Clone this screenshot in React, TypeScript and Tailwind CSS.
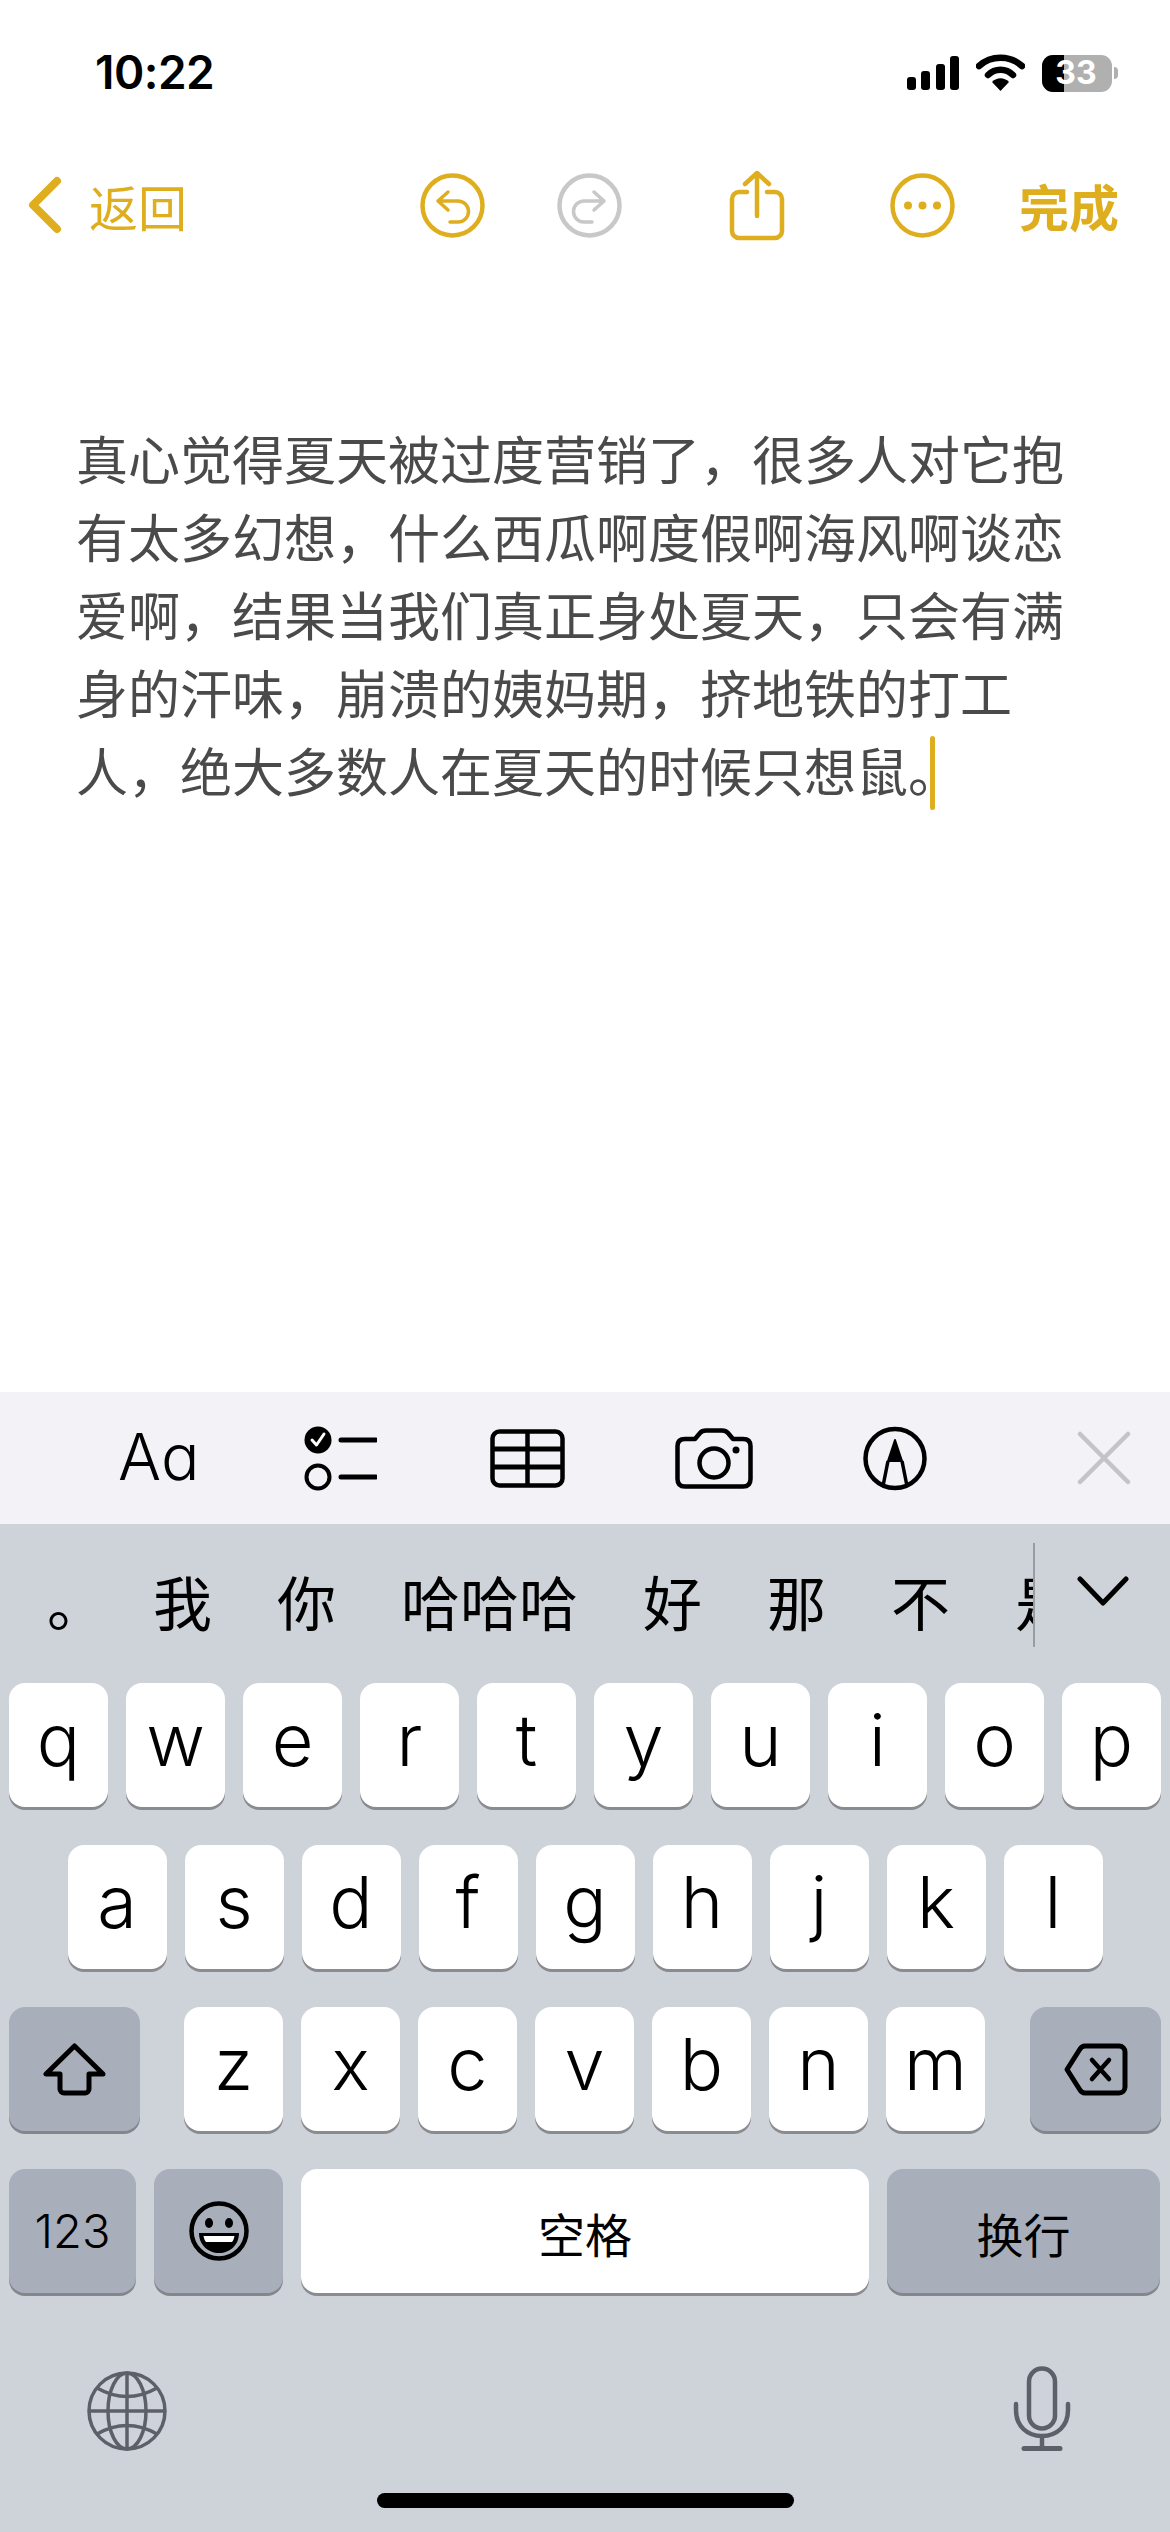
const cjk = { fontFamily: '"Noto Sans CJK SC", sans-serif' }
const latin = { fontFamily: 'Inter, "Noto Sans CJK SC", sans-serif' }

const note =
  '真心觉得夏天被过度营销了，很多人对它抱有太多幻想，什么西瓜啊度假啊海风啊谈恋爱啊，结果当我们真正身处夏天，只会有满身的汗味，崩溃的姨妈期，挤地铁的打工人，绝大多数人在夏天的时候只想鼠。'

const candidates = ['我', '你', '哈哈哈', '好', '那', '不', '是']

function LetterKey({ label }: { label: string }) {
  return (
    <div
      className="flex h-[124px] w-[99px] items-center justify-center rounded-[16px] bg-white pb-[10px] text-[72px] font-[350] leading-none text-black shadow-[0_3px_0_#898b90]"
      style={latin}
    >
      {label}
    </div>
  )
}

function StatusBar() {
  return (
    <div className="flex h-[100px] items-end pb-[8px] pl-[95px] pr-[52px]">
      <span className="translate-y-[5px] text-[46px] font-semibold leading-[50px] tracking-[-0.5px] text-black" style={latin}>
        10:22
      </span>
      <div className="ml-auto flex items-center">
        <svg width="53" height="36" viewBox="0 0 53 36">
          <rect x="0" y="22" width="9" height="13" rx="3" />
          <rect x="14" y="16" width="9" height="19" rx="3" />
          <rect x="29" y="9" width="9" height="26" rx="3" />
          <rect x="43" y="1" width="9" height="34" rx="3" />
        </svg>
        <svg className="ml-[16px]" width="49" height="38" viewBox="0 0 49 38">
          <path d="M3 12 C15 1 34 1 46 12" fill="none" stroke="#000" strokeWidth="6.5" strokeLinecap="round" />
          <path d="M12 21 C19 14 30 14 37 21" fill="none" stroke="#000" strokeWidth="6.5" strokeLinecap="round" />
          <path d="M16 28 C21 23 28 23 33 28 L24.5 37 Z" />
        </svg>
        <div className="relative ml-[17px] flex h-[37px] w-[70px] overflow-hidden rounded-[11px] bg-[#b0b0b0]">
          <div className="h-full w-[22px] bg-black" />
          <span
            className="absolute inset-0 flex items-center justify-center pr-[2px] text-[32px] font-bold leading-none text-white"
            style={latin}
          >
            33
          </span>
        </div>
        <div className="ml-[2px] h-[12px] w-[4px] rounded-r-full bg-[#b0b0b0]" />
      </div>
    </div>
  )
}

function CircleArrow({ color, flip }: { color: string; flip?: boolean }) {
  return (
    <svg width="65" height="65" viewBox="0 0 65 65" fill="none" stroke={color} strokeWidth="4.5" className={flip ? '-scale-x-100' : ''}>
      <circle cx="32.5" cy="32.5" r="30" />
      <path
        d="M28 19 L18 28 L28 37 M18 28 H38 a10.5 10.5 0 0 1 0 21 H30"
        strokeWidth="3.5"
        strokeLinecap="round"
        strokeLinejoin="round"
      />
    </svg>
  )
}

function NavBar() {
  const gold = '#dfae1f'
  return (
    <div className="mt-[69px] flex h-[72px] items-center pl-[28px]">
      <svg width="34" height="58" viewBox="0 0 34 58" fill="none" stroke={gold} strokeWidth="8" strokeLinecap="round" strokeLinejoin="round">
        <path d="M29 5 L5 29 L29 53" />
      </svg>
      <span className="ml-[27px] w-[96px] whitespace-nowrap text-[49px] leading-none text-[#dfae1f]" style={cjk}>
        返回
      </span>
      <div className="ml-[235px]">
        <CircleArrow color={gold} />
      </div>
      <div className="ml-[72px]">
        <CircleArrow color="#c8c8c8" flip />
      </div>
      <svg className="ml-[107px]" width="56" height="71" viewBox="0 0 56 71" fill="none" stroke={gold} strokeWidth="4.5" strokeLinecap="round" strokeLinejoin="round">
        <path d="M18 22 H10 a7 7 0 0 0 -7 7 V61 a7 7 0 0 0 7 7 H46 a7 7 0 0 0 7 -7 V29 a7 7 0 0 0 -7 -7 H38" />
        <path d="M28 46 V3 M16 14 L28 3 L40 14" />
      </svg>
      <svg className="ml-[105px]" width="65" height="65" viewBox="0 0 65 65" fill="none" stroke={gold} strokeWidth="4.5">
        <circle cx="32.5" cy="32.5" r="30" />
        <circle cx="18" cy="32.5" r="4" fill={gold} stroke="none" />
        <circle cx="32.5" cy="32.5" r="4" fill={gold} stroke="none" />
        <circle cx="47" cy="32.5" r="4" fill={gold} stroke="none" />
      </svg>
      <span className="ml-[64px] text-[50px] font-bold leading-none text-[#dfae1f]" style={cjk}>
        完成
      </span>
    </div>
  )
}

function FormatBar() {
  return (
    <div className="relative flex h-[132px] shrink-0 items-center bg-[#f2f2f7]">
      <span className="ml-[118px] w-[186px] pb-[2px] text-[64px] font-light leading-none text-black" style={latin}>
        Aɑ
      </span>
      <svg width="73" height="65" viewBox="0 0 73 65" fill="none" stroke="#000" strokeWidth="5">
        <circle cx="14" cy="14" r="13.5" fill="#000" stroke="none" />
        <path d="M8 14 L12.5 19 L20 8" stroke="#fff" strokeWidth="3" strokeLinecap="round" strokeLinejoin="round" />
        <circle cx="14" cy="51" r="11.5" strokeWidth="4" />
        <path d="M37 14 H72 M37 51 H72" strokeWidth="5" strokeLinecap="round" />
      </svg>
      <svg className="ml-[113px]" width="75" height="59" viewBox="0 0 75 59" fill="none" stroke="#000" strokeWidth="4.5">
        <rect x="2.5" y="2.5" width="70" height="54" rx="7" />
        <path d="M37.5 2.5 V56.5" />
        <path d="M2.5 20 H72.5 M2.5 38 H72.5" strokeWidth="5" />
      </svg>
      <svg className="ml-[110px]" width="78" height="61" viewBox="0 0 78 61" fill="none" stroke="#000" strokeWidth="4.5" strokeLinejoin="round">
        <path d="M10 11 H20 L25 5 Q27 2.500 31 2.500 H47 Q51 2.500 53 5 L58 11 H68 Q75.500 11 75.500 18 V51 Q75.500 58.500 68 58.500 H10 Q2.500 58.500 2.500 51 V18 Q2.500 11 10 11 Z" />
        <circle cx="39" cy="35" r="14.500" />
        <circle cx="61" cy="22" r="3.500" fill="#000" stroke="none" />
      </svg>
      <svg className="ml-[110px]" width="64" height="65" viewBox="0 0 64 65" fill="none" stroke="#000" strokeWidth="4.5">
        <circle cx="32" cy="32.500" r="29.500" />
        <path d="M32 14 L39 35 H25 Z" fill="#000" stroke="#000" strokeWidth="2" strokeLinejoin="round" />
        <path d="M25 35 L20 60 M39 35 L44 60" strokeWidth="3.500" />
      </svg>
      <svg className="ml-[150px]" width="54" height="54" viewBox="0 0 54 54" fill="none" stroke="#c3c3c8" strokeWidth="4.500" strokeLinecap="round">
        <path d="M3 3 L51 51 M51 3 L3 51" />
      </svg>
    </div>
  )
}

function CandidateBar() {
  return (
    <div className="flex h-[159px] items-start pt-[19px]">
      <div
        className="flex h-[104px] w-[1035px] items-center gap-[65px] overflow-hidden whitespace-nowrap border-r-[2px] border-[#9a9ca3] pl-[47px] pt-[10px] text-[59px] leading-none text-black"
        style={cjk}
      >
        <span className="-mr-[18px]">。</span>
        {candidates.map((word) => (
          <span key={word} className="shrink-0">
            {word}
          </span>
        ))}
      </div>
      <svg className="ml-[42px] mt-[33px]" width="52" height="30" viewBox="0 0 52 30" fill="none" stroke="#000" strokeWidth="5" strokeLinecap="round" strokeLinejoin="round">
        <path d="M3 3 L26 27 L49 3" />
      </svg>
    </div>
  )
}

function ShiftKey() {
  return (
    <div className="flex h-[124px] w-[131px] items-center justify-center rounded-[16px] bg-[#a9afba] shadow-[0_3px_0_#83868d]">
      <svg width="63" height="53" viewBox="0 0 63 53" fill="none" stroke="#000" strokeWidth="5" strokeLinejoin="round">
        <path d="M31.500 3 L3 31 H17 V46 a4 4 0 0 0 4 4 H42 a4 4 0 0 0 4 -4 V31 H60 Z" />
      </svg>
    </div>
  )
}

function DeleteKey() {
  return (
    <div className="flex h-[124px] w-[131px] items-center justify-center rounded-[16px] bg-[#a9afba] shadow-[0_3px_0_#83868d]">
      <svg width="64" height="53" viewBox="0 0 64 53" fill="none" stroke="#000" strokeWidth="5" strokeLinejoin="round" strokeLinecap="round">
        <path d="M21 3 H55 a6 6 0 0 1 6 6 V44 a6 6 0 0 1 -6 6 H21 a6 6 0 0 1 -5 -3 L3 26.500 L16 6 a6 6 0 0 1 5 -3 Z" />
        <path d="M28 17 L45 36 M45 17 L28 36" strokeWidth="4.500" />
      </svg>
    </div>
  )
}

function EmojiFace() {
  return (
    <svg width="60" height="60" viewBox="0 0 60 60" fill="none">
      <circle cx="30" cy="30" r="27.500" stroke="#000" strokeWidth="4.500" />
      <ellipse cx="20" cy="22" rx="4" ry="5" fill="#000" />
      <ellipse cx="40" cy="22" rx="4" ry="5" fill="#000" />
      <path d="M10 32 H50 C50 44 41 52 30 52 C19 52 10 44 10 32 Z" fill="#000" />
      <path d="M14.500 35 H45.500 C45 38 44 40 43 41 H17 C16 40 15 38 14.500 35 Z" fill="#fff" />
    </svg>
  )
}

function Keyboard() {
  return (
    <div className="flex h-[1008px] shrink-0 flex-col bg-[#ced2d9]">
      <CandidateBar />
      <div className="flex flex-col gap-[38px]">
        <div className="flex justify-center gap-[18px]">
          {'qwertyuiop'.split('').map((letter) => (
            <LetterKey key={letter} label={letter} />
          ))}
        </div>
        <div className="flex justify-center gap-[18px]">
          {'asdfghjkl'.split('').map((letter) => (
            <LetterKey key={letter} label={letter} />
          ))}
        </div>
        <div className="flex px-[9px]">
          <ShiftKey />
          <div className="ml-[44px] flex gap-[18px]">
            {'zxcvbnm'.split('').map((letter) => (
              <LetterKey key={letter} label={letter} />
            ))}
          </div>
          <div className="ml-auto">
            <DeleteKey />
          </div>
        </div>
        <div className="flex gap-[18px] px-[9px]">
          <div
            className="flex h-[124px] w-[127px] items-center justify-center rounded-[16px] bg-[#a9afba] pb-[2px] text-[47px] font-[350] leading-none text-black shadow-[0_3px_0_#83868d]"
            style={latin}
          >
            123
          </div>
          <div className="flex h-[124px] w-[129px] items-center justify-center rounded-[16px] bg-[#a9afba] shadow-[0_3px_0_#83868d]">
            <EmojiFace />
          </div>
          <div
            className="flex h-[124px] w-[568px] items-center justify-center rounded-[16px] bg-white pt-[2px] text-[47px] leading-none text-black shadow-[0_3px_0_#898b90]"
            style={cjk}
          >
            空格
          </div>
          <div
            className="flex h-[124px] w-[273px] items-center justify-center rounded-[16px] bg-[#a9afba] pt-[2px] text-[47px] leading-none text-black shadow-[0_3px_0_#83868d]"
            style={cjk}
          >
            换行
          </div>
        </div>
      </div>
      <div className="mt-[73px] flex items-start pl-[87px]">
        <svg className="mt-[5px]" width="80" height="80" viewBox="0 0 80 80" fill="none" stroke="#5d6068" strokeWidth="3.500">
          <circle cx="40" cy="40" r="38" />
          <ellipse cx="40" cy="40" rx="19" ry="38" />
          <path d="M40 2 V78 M2 40 H78" />
          <path d="M10 17 Q40 34 70 17 M10 63 Q40 46 70 63" />
        </svg>
        <svg className="ml-[846px]" width="58" height="85" viewBox="0 0 58 85" fill="none" stroke="#5d6068" strokeWidth="4.500" strokeLinecap="round">
          <rect x="16" y="2.500" width="26" height="60" rx="13" />
          <path d="M3 38 V44 C3 60 14 70 29 70 C44 70 55 60 55 44 V38" />
          <path d="M29 70 V82" strokeLinecap="butt" />
          <path d="M11 82.500 H47" strokeWidth="5" />
        </svg>
      </div>
      <div className="mt-[42px] flex justify-center">
        <div className="h-[15px] w-[417px] rounded-full bg-black" />
      </div>
    </div>
  )
}

export default function App() {
  return (
    <div className="flex h-[2532px] w-[1170px] flex-col overflow-hidden bg-white">
      <StatusBar />
      <NavBar />
      <main className="flex-1 pl-[76px] pr-[80px] pt-[178px]">
        <p className="text-[52px] leading-[78px] text-[#4a4a4a]" style={cjk}>
          {note}
          <span className="-ml-[30px] inline-block h-[74px] w-[5px] rounded-full bg-[#dfae1f] align-[-18px]" />
        </p>
      </main>
      <FormatBar />
      <Keyboard />
    </div>
  )
}
